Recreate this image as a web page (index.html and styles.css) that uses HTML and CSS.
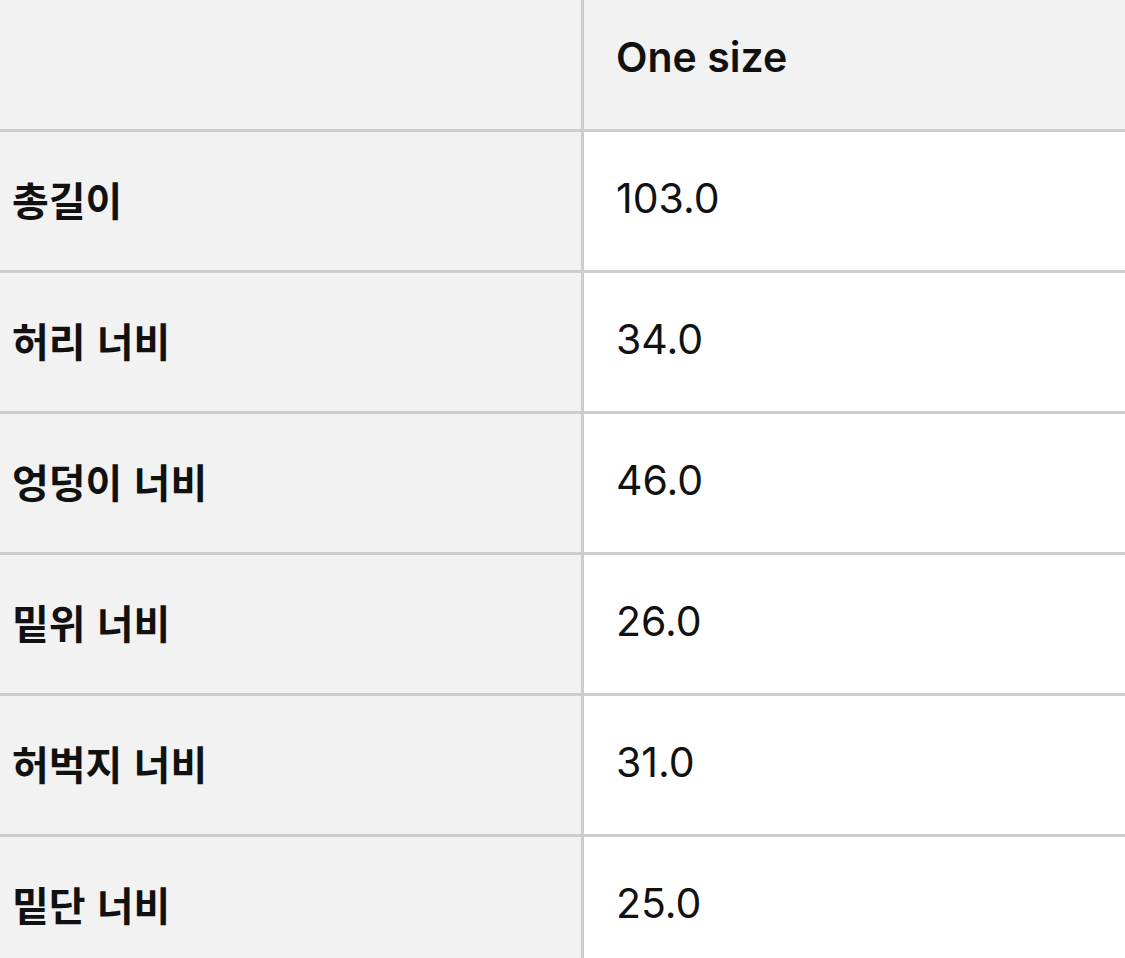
FILE: index.html
```html
<!DOCTYPE html>
<html lang="ko">
<head>
<meta charset="utf-8">
<link rel="stylesheet" href="styles.css">
</head>
<body>
<table class="size-table">
  <thead>
    <tr>
      <th class="label"></th>
      <th class="value head">One size</th>
    </tr>
  </thead>
  <tbody>
    <tr><th class="label">총길이</th><td class="value">103.0</td></tr>
    <tr><th class="label">허리 너비</th><td class="value">34.0</td></tr>
    <tr><th class="label">엉덩이 너비</th><td class="value">46.0</td></tr>
    <tr><th class="label">밑위 너비</th><td class="value">26.0</td></tr>
    <tr><th class="label">허벅지 너비</th><td class="value">31.0</td></tr>
    <tr><th class="label">밑단 너비</th><td class="value">25.0</td></tr>
  </tbody>
</table>
</body>
</html>
```

FILE: styles.css
```css
html, body {
  margin: 0;
  padding: 0;
  background: #ffffff;
  overflow: hidden;
}

.size-table {
  width: 100%;
  margin-top: -9px;
  border-collapse: separate;
  border-spacing: 0;
  font-family: "Inter", "Noto Sans CJK KR", sans-serif;
  font-size: 41px;
  line-height: 1.2;
  color: #111111;
}

.size-table th,
.size-table td {
  height: 138px;
  padding: 0 0 4px 0;
  box-sizing: border-box;
  border-bottom: 3px solid #cdcdcd;
  text-align: left;
  vertical-align: middle;
}

.size-table tr {
  height: 141px;
}

.label {
  width: 584px;
  padding-left: 12px !important;
  background: #f2f2f2;
  border-right: 3px solid #cdcdcd;
  font-weight: 700;
  font-size: 40px;
  font-family: "Noto Sans CJK KR", "Inter", sans-serif;
}

.value {
  padding-left: 32px !important;
  font-weight: 400;
}

.value.head {
  background: #f2f2f2;
  font-weight: 600;
  font-family: "Inter", sans-serif;
}
```
